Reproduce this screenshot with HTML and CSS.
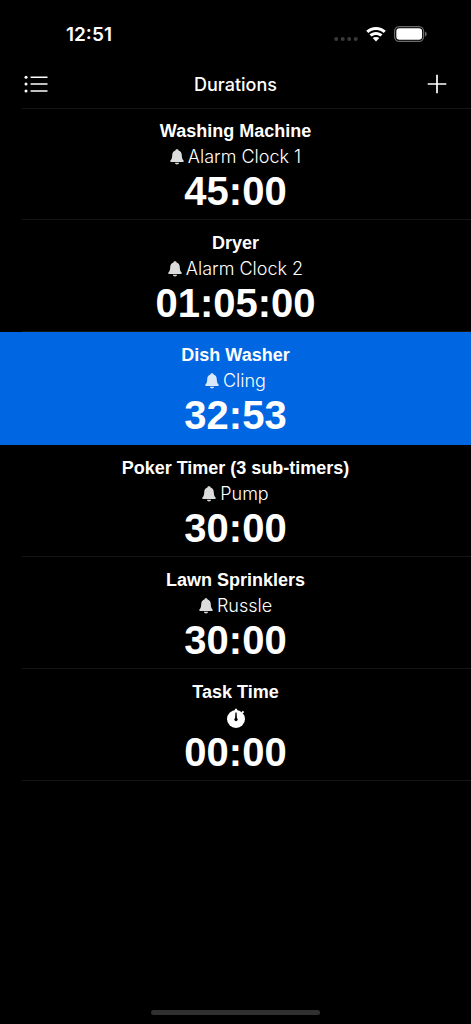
FILE: index.html
```html
<!DOCTYPE html>
<html lang="en">
<head>
<meta charset="utf-8">
<meta name="viewport" content="width=device-width, initial-scale=1">
<title>Durations</title>
<link rel="stylesheet" href="styles.css">
</head>
<body>
<svg class="symbols" aria-hidden="true">
  <symbol id="bell" viewBox="0 0 14 16">
    <path d="M7 0.3C6.1 0.3 5.5 0.8 5.4 1.4C3.2 2.1 2.2 3.9 2.2 6.2C2.1 9 1.7 10 0.6 11.3C0.1 11.9 0 13.1 1.1 13.1H12.9C14 13.1 13.9 11.9 13.4 11.3C12.3 10 11.9 9 11.8 6.2C11.8 3.9 10.8 2.1 8.6 1.4C8.5 0.8 7.9 0.3 7 0.3ZM4.9 13.8C5.1 14.8 5.9 15.4 7 15.4S8.9 14.8 9.1 13.8Z"/>
  </symbol>
</svg>
<div class="screen">
  <div class="status">
    <time class="clock">12:51</time>
    <div class="indicators">
      <svg class="cell" viewBox="0 0 24 4" aria-hidden="true"><circle cx="2.2" cy="2" r="2"/><circle cx="8.7" cy="2" r="2"/><circle cx="15.2" cy="2" r="2"/><circle cx="21.7" cy="2" r="2"/></svg>
      <svg class="wifi" viewBox="0 0 20 15" aria-hidden="true"><path d="M10 0C6.2 0 2.8 1.4 0.2 3.8L2.3 6C4.4 4.1 7 3 10 3S15.6 4.1 17.7 6L19.8 3.8C17.2 1.4 13.8 0 10 0ZM10 5C7.5 5 5.2 5.9 3.5 7.4L5.6 9.6C6.8 8.6 8.3 7.9 10 7.9S13.2 8.6 14.4 9.6L16.5 7.4C14.8 5.9 12.5 5 10 5ZM10 9.9C8.7 9.9 7.6 10.3 6.7 11.1L10 14.6L13.3 11.1C12.4 10.3 11.3 9.9 10 9.9Z"/></svg>
      <svg class="battery" viewBox="0 0 33 16" aria-hidden="true"><rect class="battery-case" x="0.6" y="0.6" width="29" height="14.8" rx="4.6"/><rect x="2.3" y="2.3" width="25.8" height="11.4" rx="3.2"/><path class="battery-tip" d="M31 5.6C33.3 6.3 33.3 9.7 31 10.4Z"/></svg>
    </div>
  </div>
  <header class="bar">
    <button class="icon-button" type="button" aria-label="List">
      <svg class="list-icon" viewBox="0 0 24 18" aria-hidden="true"><circle cx="2" cy="2.3" r="1.5"/><circle cx="2" cy="9" r="1.5"/><circle cx="2" cy="15.9" r="1.5"/><path d="M6.6 2.3H23.5M6.6 9H23.5M6.6 15.9H23.5"/></svg>
    </button>
    <h1 class="title">Durations</h1>
    <button class="icon-button end" type="button" aria-label="Add">
      <svg class="add-icon" viewBox="0 0 20 20" aria-hidden="true"><path d="M10 0.7V19.3M0.7 10H19.3"/></svg>
    </button>
  </header>
  <main>
    <ul class="timers">
      <li class="timer">
        <h2 class="name">Washing Machine</h2>
        <p class="sound"><svg class="bell" aria-hidden="true"><use href="#bell"/></svg>Alarm Clock 1</p>
        <p class="time">45:00</p>
      </li>
      <li class="timer">
        <h2 class="name">Dryer</h2>
        <p class="sound"><svg class="bell" aria-hidden="true"><use href="#bell"/></svg>Alarm Clock 2</p>
        <p class="time">01:05:00</p>
      </li>
      <li class="timer selected">
        <h2 class="name">Dish Washer</h2>
        <p class="sound"><svg class="bell" aria-hidden="true"><use href="#bell"/></svg>Cling</p>
        <p class="time">32:53</p>
      </li>
      <li class="timer">
        <h2 class="name">Poker Timer (3 sub-timers)</h2>
        <p class="sound"><svg class="bell" aria-hidden="true"><use href="#bell"/></svg>Pump</p>
        <p class="time">30:00</p>
      </li>
      <li class="timer">
        <h2 class="name">Lawn Sprinklers</h2>
        <p class="sound"><svg class="bell" aria-hidden="true"><use href="#bell"/></svg>Russle</p>
        <p class="time">30:00</p>
      </li>
      <li class="timer">
        <h2 class="name">Task Time</h2>
        <p class="sound"><svg class="stopwatch" viewBox="0 0 20 20" role="img" aria-label="Stopwatch"><circle cx="10" cy="11" r="9"/><path d="M8.3 3L9.2 0.8H10.8L11.7 3ZM15.4 4.3L16.8 2.8L18.2 4L16.8 5.6Z"/><path class="hand" d="M9.4 4.5H10.6L10.9 10A1.7 1.7 0 1 1 9.1 10Z"/></svg></p>
        <p class="time">00:00</p>
      </li>
    </ul>
  </main>
  <div class="home"></div>
</div>
</body>
</html>
```
FILE: styles.css
```css
* {
  box-sizing: border-box;
  margin: 0;
  padding: 0;
}

body {
  background: #000;
  color: #fff;
  font-family: Inter, "Liberation Sans", sans-serif;
}

.symbols {
  position: absolute;
  width: 0;
  height: 0;
}

.screen {
  display: flex;
  flex-direction: column;
  min-height: 100vh;
}

.status {
  display: flex;
  align-items: center;
  justify-content: space-between;
  padding: 24px 44px 0 66px;
}

.clock {
  padding-top: 2px;
  font-size: 19px;
  font-weight: 600;
  line-height: 18px;
}

.indicators {
  display: flex;
  align-items: center;
  gap: 8px;
  fill: #fff;
}

.cell {
  width: 24px;
  height: 4px;
  margin-top: 10px;
  fill: #3a3a3a;
}

.wifi {
  width: 20px;
  height: 15px;
}

.battery {
  width: 33px;
  height: 16px;
}

.battery-case {
  fill: none;
  stroke: #6b6b6b;
  stroke-width: 1.2;
}

.battery-tip {
  fill: #6b6b6b;
}

.bar {
  display: grid;
  grid-template-columns: 1fr auto 1fr;
  align-items: center;
  padding: 16px 24px 0;
}

.icon-button {
  display: flex;
  align-items: center;
  height: 48px;
  background: none;
  border: 0;
}

.end {
  justify-content: flex-end;
}

.list-icon {
  width: 24px;
  height: 18px;
  fill: #fff;
  stroke: #fff;
  stroke-width: 1.5;
}

.list-icon circle {
  stroke: none;
}

.add-icon {
  width: 20px;
  height: 20px;
  stroke: #fff;
  stroke-width: 1.7;
}

.title {
  padding-top: 2px;
  font-size: 18px;
  font-weight: 500;
  line-height: 24px;
}

main {
  flex: 1;
}

.timers {
  list-style: none;
  background: linear-gradient(#141414, #141414) 22px 0 / 100% 1px no-repeat;
}

.timer {
  padding: 12px 0 10px;
  text-align: center;
  background: linear-gradient(#141414, #141414) 22px 100% / 100% 1px no-repeat;
}

.selected {
  background: #0066e1;
  border-bottom: 1px solid #0066e1;
}

.name {
  font: bold 18px/22px "Liberation Sans", Arial, sans-serif;
}

.sound {
  display: flex;
  align-items: center;
  justify-content: center;
  gap: 4px;
  height: 26px;
  padding-top: 4px;
  font-size: 18px;
  font-weight: 300;
  line-height: 22px;
}

.bell {
  width: 14px;
  height: 16px;
  fill: #dcdcdc;
}

.selected .bell {
  fill: #d9e8fb;
}

.stopwatch {
  width: 20px;
  height: 20px;
  fill: #fff;
}

.hand {
  fill: #000;
}

.time {
  padding-top: 4px;
  font: bold 40px/38px "Liberation Sans", Arial, sans-serif;
}

.home {
  align-self: center;
  width: 36%;
  height: 5px;
  margin-bottom: 9px;
  border-radius: 3px;
  background: #303030;
}
```
